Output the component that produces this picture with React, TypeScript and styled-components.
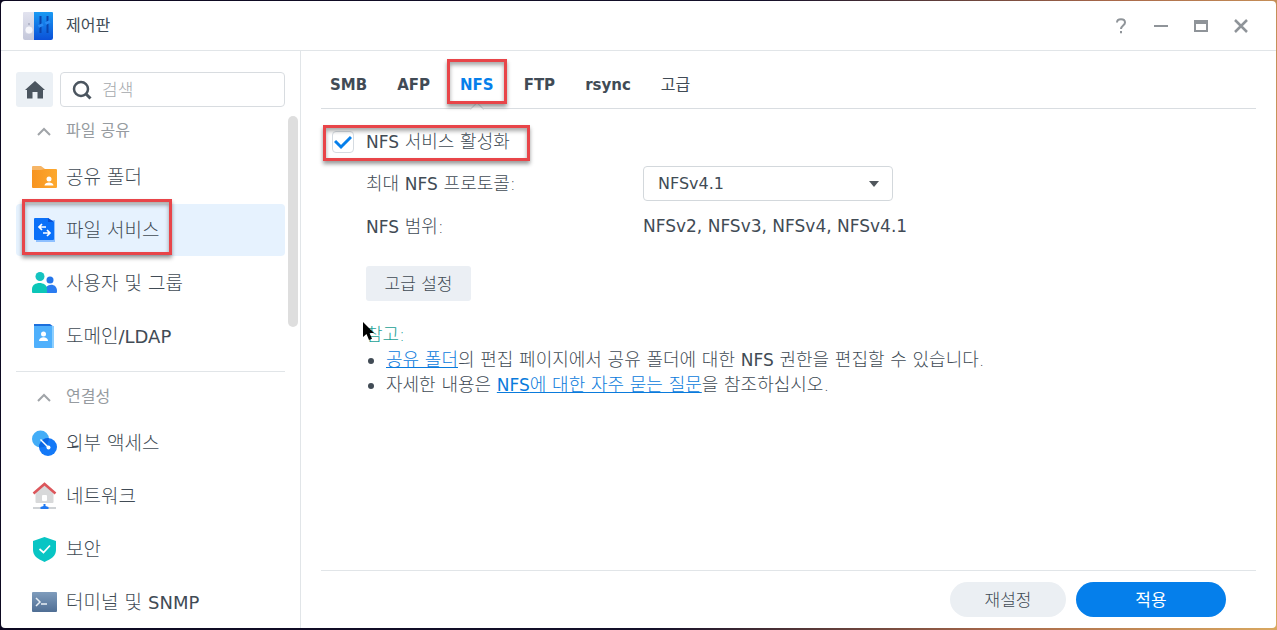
import React from "react";
import styled, { createGlobalStyle } from "styled-components";

const ink = "#414b55";
const blue = "#057feb";
const line = "#e1e5e8";

const GlobalStyle = createGlobalStyle`
  *, *::before, *::after { box-sizing: border-box; }
  body {
    margin: 0;
    color: ${ink};
    font-family: "DejaVu Sans", "Noto Sans CJK KR", sans-serif;
    font-size: 16px;
    font-weight: 300;
    line-height: 24px;
  }
  button, input, select { font: inherit; color: inherit; }
`;

const Desktop = styled.div`
  display: flex;
  min-height: 100vh;
  padding: 1px 1px 2px;
  background: linear-gradient(100deg, #0c0820 0%, #14102a 55%, #a8684a 80%, #d9a860 100%);
`;

const Window = styled.div`
  flex: 1;
  display: flex;
  flex-direction: column;
  overflow: hidden;
  border-radius: 4px;
  background: #fff;
`;

const TitleBar = styled.header`
  display: flex;
  align-items: center;
  height: 50px;
  padding: 0 22px;
  border-bottom: 1px solid ${line};
`;

const Title = styled.h1`
  flex: 1;
  margin: 0 0 0 13px;
  font-size: 16px;
  font-weight: 400;
`;

const WindowControls = styled.div`
  display: flex;
  gap: 14px;
`;

const WindowButton = styled.button`
  display: grid;
  place-items: center;
  width: 26px;
  height: 26px;
  padding: 0;
  border: 0;
  background: none;
  color: #8f9499;
`;

const Body = styled.div`
  flex: 1;
  display: flex;
`;

const Sidebar = styled.aside`
  position: relative;
  flex: 0 0 300px;
  min-width: 0;
  padding: 21px 15px 0;
  border-right: 1px solid ${line};
`;

const ScrollThumb = styled.div`
  position: absolute;
  top: 65px;
  right: 2px;
  width: 10px;
  height: 211px;
  border-radius: 5px;
  background: #dedede;
`;

const SearchRow = styled.div`
  display: flex;
  align-items: center;
  gap: 7px;
  margin-bottom: 4px;
`;

const HomeButton = styled.button`
  display: grid;
  place-items: center;
  width: 37px;
  height: 35px;
  padding: 0;
  border: 0;
  border-radius: 3px;
  background: #ebf0f5;
`;

const SearchBox = styled.label`
  flex: 1;
  display: flex;
  align-items: center;
  gap: 10px;
  min-width: 0;
  height: 35px;
  padding: 0 11px;
  border: 1px solid #d8dce0;
  border-radius: 4px;
`;

const SearchInput = styled.input`
  flex: 1;
  min-width: 0;
  padding: 0;
  border: 0;
  outline: 0;
  background: none;
  font-size: 17px;
  &::placeholder { color: #a4a8ac; opacity: 1; }
`;

const Group = styled.section`
  & + & {
    margin-top: 9px;
    padding-top: 5px;
    border-top: 1px solid ${line};
  }
`;

const GroupToggle = styled.button`
  display: flex;
  align-items: center;
  gap: 15px;
  width: 100%;
  height: 40px;
  padding: 0 0 0 21px;
  border: 0;
  background: none;
  color: #969ba0;
  font-weight: 400;
`;

const ItemList = styled.ul`
  display: grid;
  gap: 1px;
  margin: 0;
  padding: 0;
  list-style: none;
`;

const Item = styled.a<{ $active?: boolean }>`
  position: relative;
  display: flex;
  align-items: center;
  gap: 8px;
  height: 52px;
  padding-left: 15px;
  border-radius: 4px;
  background: ${(p) => (p.$active ? "#e6f2fe" : "transparent")};
  color: ${ink};
  font-size: 19px;
  text-decoration: none;
`;

/* Latin words run one pixel smaller than the Hangul beside them */
const Latin = styled.span`
  font-size: calc(1em - 1px);
  font-weight: 400;
  line-height: 1;
`;

const Callout = styled.span<{ $inset: string }>`
  position: absolute;
  inset: ${(p) => p.$inset};
  border: 3px solid #e84549;
  box-shadow: 0 3px 4px rgba(0, 0, 0, 0.4), inset 0 3px 4px rgba(0, 0, 0, 0.35);
  pointer-events: none;
`;

const Main = styled.main`
  flex: 1;
  display: flex;
  flex-direction: column;
  min-width: 0;
  padding: 0 20px;
`;

const Tabs = styled.nav`
  display: flex;
  align-items: center;
  gap: 30px;
  height: 58px;
  padding: 10px 0 0 9px;
  border-bottom: 1px solid #d9dde1;
`;

const Tab = styled.a<{ $active?: boolean; $korean?: boolean }>`
  position: relative;
  color: ${(p) => (p.$active ? blue : ink)};
  font-size: ${(p) => (p.$korean ? 16 : 15)}px;
  font-weight: ${(p) => (p.$korean ? 400 : 700)};
  text-decoration: none;
`;

const TabNotch = styled.span`
  position: absolute;
  bottom: -17px;
  left: calc(50% - 5px);
  width: 10px;
  height: 10px;
  border: 1px solid #d9dde1;
  border-width: 1px 0 0 1px;
  background: linear-gradient(135deg, #fff 50%, transparent 50%);
  transform: rotate(45deg);
`;

const Content = styled.div`
  flex: 1;
  padding: 16px 0 16px 11px;
  font-size: 18px;
`;

const EnableRow = styled.label`
  position: relative;
  display: inline-flex;
  align-items: center;
  gap: 12px;
  height: 34px;
`;

const CheckBox = styled.input`
  appearance: none;
  width: 22px;
  height: 22px;
  margin: 0;
  border: 1px solid #d5dbe1;
  border-radius: 4px;
  background: #fff;
`;

const CheckMark = styled.svg`
  position: absolute;
  left: 2px;
  top: 9px;
  pointer-events: none;
`;

const Settings = styled.div`
  padding: 3px 0 0 34px;
`;

const Field = styled.div`
  display: grid;
  grid-template-columns: 277px 1fr;
  align-items: center;
  height: 43px;
`;

const SelectBox = styled.span`
  position: relative;
  width: 250px;
`;

const Select = styled.select`
  display: block;
  appearance: none;
  width: 100%;
  height: 35px;
  padding: 0 14px;
  border: 1px solid #d3d8dc;
  border-radius: 4px;
  background: #fff;
  font-size: 16px;
  font-weight: 400;
`;

const SelectArrow = styled.svg`
  position: absolute;
  top: 15px;
  right: 13px;
  pointer-events: none;
`;

const AdvancedButton = styled.button`
  width: 105px;
  height: 35px;
  margin-top: 18px;
  padding: 0;
  border: 0;
  border-radius: 3px;
  background: #ebeff4;
  font-size: 17px;
`;

const NoteTitle = styled.p`
  position: relative;
  margin: 22px 0 0;
  color: #1aa196;
`;

const Cursor = styled.svg`
  position: absolute;
  top: -2px;
  left: -4px;
`;

const Notes = styled.ul`
  margin: 0;
  padding: 0 0 0 20px;
  line-height: 25px;
`;

const Link = styled.a`
  color: #0a7bdc;
  text-decoration: underline;
`;

const Footer = styled.footer`
  display: flex;
  justify-content: flex-end;
  gap: 10px;
  padding: 11px 30px;
  border-top: 1px solid ${line};
  font-size: 17px;
`;

const FooterButton = styled.button<{ $primary?: boolean }>`
  width: ${(p) => (p.$primary ? 150 : 116)}px;
  height: 35px;
  padding: 0;
  border: 0;
  border-radius: 18px;
  background: ${(p) => (p.$primary ? blue : "#ebeff3")};
  color: ${(p) => (p.$primary ? "#fff" : ink)};
  font-weight: ${(p) => (p.$primary ? 400 : 300)};
`;

const ControlPanelIcon = () => (
  <svg width="30" height="28" viewBox="0 0 30 28" aria-hidden="true">
    <defs>
      <linearGradient id="cpBlue" x1="0" y1="0" x2="0" y2="1">
        <stop offset="0" stopColor="#1a9af3" />
        <stop offset="1" stopColor="#0b50d8" />
      </linearGradient>
      <linearGradient id="cpGrey" x1="0" y1="0" x2="0" y2="1">
        <stop offset="0" stopColor="#e2e3ef" />
        <stop offset="1" stopColor="#c4c7da" />
      </linearGradient>
    </defs>
    <path d="M1 0h10v28H2a2 2 0 0 1-2-2V1a1 1 0 0 1 1-1z" fill="url(#cpGrey)" />
    <path d="M11 0h18a1 1 0 0 1 1 1v25a2 2 0 0 1-2 2H11z" fill="url(#cpBlue)" />
    <circle cx="6" cy="18" r="4" fill="#f6f6fb" stroke="#c3c6d8" strokeWidth=".5" />
    <circle cx="6" cy="12" r="1" fill="#a9adbf" />
    <path d="M17.500 4v17M24.500 4v17" stroke="#0b45ae" strokeWidth="2" />
    <path d="M15.500 14.500 20 12.500M22.500 11.500 27 9.500" stroke="#2a8cf5" strokeWidth="3" />
  </svg>
);

const FolderIcon = () => (
  <svg width="27" height="26" viewBox="0 0 27 26" aria-hidden="true">
    <defs>
      <linearGradient id="folder" x1="0" y1="0" x2="1" y2="0">
        <stop offset="0" stopColor="#f79420" />
        <stop offset="1" stopColor="#fda92f" />
      </linearGradient>
    </defs>
    <path d="M1 3a1 1 0 0 1 1-1h8l4 3h11v10H1z" fill="#f6b566" />
    <path d="M1 6h9l4-1h11a1 1 0 0 1 1 1v17a1 1 0 0 1-1 1H2a1 1 0 0 1-1-1z" fill="url(#folder)" />
    <circle cx="18" cy="15" r="2.5" fill="#fff" />
    <path d="M13.500 21.500c0-4 9-4 9 0z" fill="#fff" />
  </svg>
);

const FileServiceIcon = () => (
  <svg width="27" height="28" viewBox="0 0 27 28" aria-hidden="true">
    <path d="M5 4h19v22H5z" fill="#8ec0ff" />
    <path d="M3 3a1 1 0 0 1 1-1h13l6 4v17a1 1 0 0 1-1 1H4a1 1 0 0 1-1-1z" fill="#0a70f8" />
    <path d="M17 2l6 4h-6z" fill="#0a4fd0" />
    <path d="M15 11H8m3-3-3 3 3 3M12 17h7m-3-3 3 3-3 3" fill="none" stroke="#fff" strokeWidth="1.7" />
  </svg>
);

const UsersIcon = () => (
  <svg width="27" height="26" viewBox="0 0 27 26" aria-hidden="true">
    <circle cx="19" cy="10" r="3.500" fill="#2475ea" />
    <path d="M13 23c0-10 13-11 13-2v1a1 1 0 0 1-1 1z" fill="#2b7cf0" />
    <circle cx="9" cy="6.500" r="4.500" fill="#14c3c0" />
    <path d="M1 22v-3c0-8 15-8 15 0v4H2a1 1 0 0 1-1-1z" fill="#0cc6b8" />
  </svg>
);

const DirectoryIcon = () => (
  <svg width="27" height="26" viewBox="0 0 27 26" aria-hidden="true">
    <path d="M3 1h16l4 3H3z" fill="#1c6fdc" />
    <path d="M3 3h20v21a1 1 0 0 1-1 1H4a1 1 0 0 1-1-1z" fill="#4fb0fc" />
    <path d="M21 3h2v21a1 1 0 0 1-1 1h-1z" fill="#8dcfff" />
    <circle cx="12.500" cy="11" r="2.500" fill="#fff" />
    <path d="M8 18c0-5 9-5 9 0z" fill="#fff" />
  </svg>
);

const ExternalIcon = () => (
  <svg width="27" height="26" viewBox="0 0 27 26" aria-hidden="true">
    <circle cx="9.500" cy="9" r="8.500" fill="#43adf7" />
    <circle cx="17" cy="17" r="9" fill="#1479f7" />
    <path d="M8.200 15.500A9 9 0 0 1 17.700 8 8.500 8.500 0 0 1 8.200 17.400z" fill="#0a66e4" />
    <path d="M9.500 9.500 17 17" stroke="#fff" strokeWidth="1.500" />
    <circle cx="17.500" cy="17.500" r="2" fill="#fff" />
  </svg>
);

const NetworkIcon = () => (
  <svg width="27" height="28" viewBox="0 0 27 28" aria-hidden="true">
    <path d="M4.500 10 13.500 3l9 7v10a1 1 0 0 1-1 1h-16a1 1 0 0 1-1-1z" fill="#d8d9da" />
    <path d="M2.500 11.500 13.500 2l11 9.500" fill="none" stroke="#dc565b" strokeWidth="2.500" />
    <rect x="11" y="13" width="5" height="6" rx="1" fill="#fff" />
    <path d="M2 26h23" stroke="#cfd2d5" strokeWidth="2" />
    <path d="M12.500 22h2v2l3 1v2h-8v-2l3-1z" fill="#1f78f2" />
  </svg>
);

const ShieldIcon = () => (
  <svg width="27" height="26" viewBox="0 0 27 26" aria-hidden="true">
    <path d="M13.500 1 25 5v9c0 6-5 9-11.500 12C7 23 2 20 2 14V5z" fill="#08c5c4" />
    <path d="m8.500 13 4 3.500L19 9.500" fill="none" stroke="#fff" strokeWidth="1.700" />
  </svg>
);

const TerminalIcon = () => (
  <svg width="27" height="22" viewBox="0 0 27 22" aria-hidden="true">
    <defs>
      <linearGradient id="term" x1="0" y1="0" x2="0" y2="1">
        <stop offset="0" stopColor="#7f9cbc" />
        <stop offset="1" stopColor="#4f6e94" />
      </linearGradient>
    </defs>
    <rect x="1" y="1" width="25" height="20" rx="1" fill="url(#term)" />
    <path d="m5 7 4 4-4 4M10 13h6" fill="none" stroke="#e8eef5" strokeWidth="1.500" />
  </svg>
);

type NavItem = { label: string; latin?: string; Icon: React.FC; active?: boolean };

const groups: { name: string; items: NavItem[] }[] = [
  {
    name: "파일 공유",
    items: [
      { label: "공유 폴더", Icon: FolderIcon },
      { label: "파일 서비스", Icon: FileServiceIcon, active: true },
      { label: "사용자 및 그룹", Icon: UsersIcon },
      { label: "도메인", latin: "/LDAP", Icon: DirectoryIcon },
    ],
  },
  {
    name: "연결성",
    items: [
      { label: "외부 액세스", Icon: ExternalIcon },
      { label: "네트워크", Icon: NetworkIcon },
      { label: "보안", Icon: ShieldIcon },
      { label: "터미널 및 ", latin: "SNMP", Icon: TerminalIcon },
    ],
  },
];

const tabs = ["SMB", "AFP", "NFS", "FTP", "rsync", "고급"];

export default function App() {
  return (
    <>
      <GlobalStyle />
      <Desktop>
        <Window>
          <TitleBar>
            <ControlPanelIcon />
            <Title>제어판</Title>
            <WindowControls>
              <WindowButton aria-label="도움말">
                <svg width="14" height="18" viewBox="0 0 14 18" fill="none" stroke="currentColor" strokeWidth="2">
                  <path d="M3 5.500C3 1 11 1 11 5.500c0 3-4 3-4 6.500" />
                  <path d="M7 14v2.200" />
                </svg>
              </WindowButton>
              <WindowButton aria-label="최소화">
                <svg width="16" height="16" viewBox="0 0 16 16">
                  <path d="M1 7h14v2H1z" fill="currentColor" />
                </svg>
              </WindowButton>
              <WindowButton aria-label="최대화">
                <svg width="16" height="14" viewBox="0 0 16 14">
                  <path d="M1 1h14v12H1zM3 5v6h10V5z" fill="currentColor" fillRule="evenodd" />
                </svg>
              </WindowButton>
              <WindowButton aria-label="닫기">
                <svg width="14" height="14" viewBox="0 0 14 14">
                  <path d="m1 1 12 12M13 1 1 13" stroke="currentColor" strokeWidth="2.500" />
                </svg>
              </WindowButton>
            </WindowControls>
          </TitleBar>
          <Body>
            <Sidebar>
              <SearchRow>
                <HomeButton aria-label="홈">
                  <svg width="20" height="18" viewBox="0 0 20 18">
                    <path d="M10 0 20 9h-2v8.500h-5.500V11h-5v6.500H2V9H0z" fill="#4b555f" />
                  </svg>
                </HomeButton>
                <SearchBox>
                  <svg width="20" height="20" viewBox="0 0 20 20" fill="none" stroke="#4b555f">
                    <circle cx="9" cy="9" r="7" strokeWidth="2.500" />
                    <path d="m13.500 13.500 5 5" strokeWidth="3" />
                  </svg>
                  <SearchInput placeholder="검색" aria-label="검색" />
                </SearchBox>
              </SearchRow>
              <ScrollThumb />
              {groups.map((group) => (
                <Group key={group.name}>
                  <GroupToggle>
                    <svg width="14" height="9" viewBox="0 0 14 9">
                      <path d="m1 8 6-6 6 6" fill="none" stroke="#a0a4a8" strokeWidth="2" />
                    </svg>
                    {group.name}
                  </GroupToggle>
                  <ItemList>
                    {group.items.map(({ label, latin, Icon, active }) => (
                      <li key={label}>
                        <Item href="#" $active={active}>
                          <Icon />
                          <span>
                            {label}
                            {latin && <Latin>{latin}</Latin>}
                          </span>
                          {active && <Callout $inset="-5px 113px 1px 6px" />}
                        </Item>
                      </li>
                    ))}
                  </ItemList>
                </Group>
              ))}
            </Sidebar>
            <Main>
              <Tabs>
                {tabs.map((tab) => (
                  <Tab key={tab} href="#" $active={tab === "NFS"} $korean={tab === "고급"}>
                    {tab}
                    {tab === "NFS" && (
                      <>
                        <TabNotch />
                        <Callout $inset="-14px -13px -7px" />
                      </>
                    )}
                  </Tab>
                ))}
              </Tabs>
              <Content>
                <EnableRow>
                  <CheckBox type="checkbox" defaultChecked />
                  <CheckMark width="18" height="16" viewBox="0 0 18 16">
                    <path d="m1 7 6 6L17 3" fill="none" stroke={blue} strokeWidth="3" />
                  </CheckMark>
                  <span>
                    <Latin>NFS</Latin> 서비스 활성화
                  </span>
                  <Callout $inset="0 -20px -2px -9px" />
                </EnableRow>
                <Settings>
                  <Field>
                    <label htmlFor="protocol">
                      최대 <Latin>NFS</Latin> 프로토콜:
                    </label>
                    <SelectBox>
                      <Select id="protocol" defaultValue="NFSv4.1">
                        <option>NFSv4.1</option>
                      </Select>
                      <SelectArrow width="12" height="6" viewBox="0 0 12 6">
                        <path d="M1 0h10L6 6z" fill="#50565c" />
                      </SelectArrow>
                    </SelectBox>
                  </Field>
                  <Field>
                    <span>
                      <Latin>NFS</Latin> 범위:
                    </span>
                    <Latin>NFSv2, NFSv3, NFSv4, NFSv4.1</Latin>
                  </Field>
                  <AdvancedButton>고급 설정</AdvancedButton>
                  <NoteTitle>
                    참고:
                    <Cursor width="13" height="20" viewBox="0 0 13 20" aria-hidden="true">
                      <path d="M1 1v15l3.500-3 2.500 6 3-1.300L7.500 12H12z" fill="#000" />
                    </Cursor>
                  </NoteTitle>
                  <Notes>
                    <li>
                      <Link href="#">공유 폴더</Link>의 편집 페이지에서 공유 폴더에 대한 <Latin>NFS</Latin> 권한을 편집할 수 있습니다.
                    </li>
                    <li>
                      자세한 내용은{" "}
                      <Link href="#">
                        <Latin>NFS</Latin>에 대한 자주 묻는 질문
                      </Link>
                      을 참조하십시오.
                    </li>
                  </Notes>
                </Settings>
              </Content>
              <Footer>
                <FooterButton>재설정</FooterButton>
                <FooterButton $primary>적용</FooterButton>
              </Footer>
            </Main>
          </Body>
        </Window>
      </Desktop>
    </>
  );
}
